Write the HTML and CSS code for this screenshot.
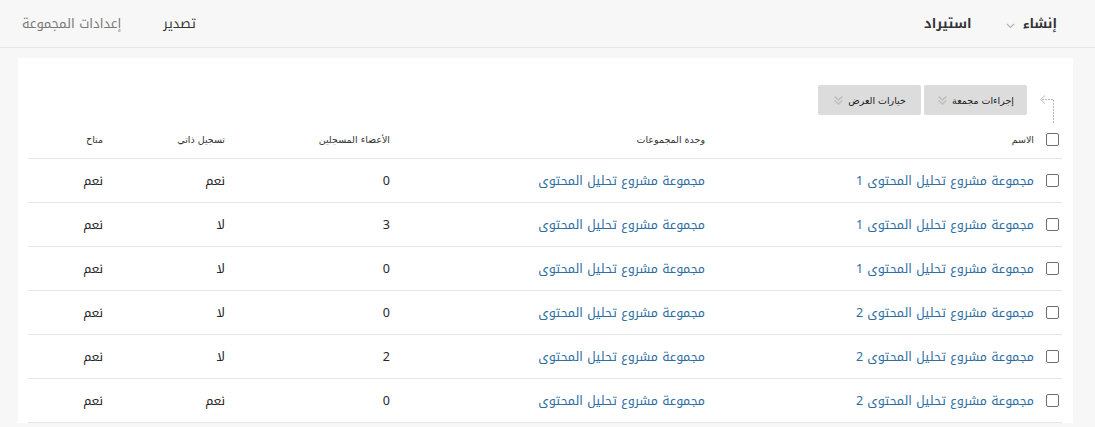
FILE: index.html
```html
<!DOCTYPE html>
<html lang="ar" dir="rtl">
<head>
  <meta charset="UTF-8" />
  <title>المجموعات</title>
  <link rel="stylesheet" href="styles.css">
</head>
<body>

  <div class="topbar">
    <div class="top-main">
      <a class="top-link strong">إنشاء <span class="chev">
        <svg width="9" height="6" viewBox="0 0 9 6"><path d="M1 1l3.5 3.5L8 1" fill="none" stroke="#b5b5b5" stroke-width="1.2"/></svg>
      </span></a>
      <a class="top-link strong">استيراد</a>
    </div>
    <div class="top-side">
      <a class="top-link dark">تصدير</a>
      <a class="top-link muted">إعدادات المجموعة</a>
    </div>
  </div>

  <div class="panel">
    <div class="toolbar">
      <svg class="select-arrow" width="20" height="30" viewBox="0 0 20 30">
        <path d="M16.5 30V6.5H4" fill="none" stroke="#b8b8b8" stroke-width="1" stroke-dasharray="2 1"/>
        <path d="M8 2.5L3.5 6.5 8 10.5" fill="none" stroke="#b8b8b8" stroke-width="1"/>
      </svg>
      <button class="tool-btn">إجراءات مجمعة <span class="dbl">
        <svg width="11" height="11" viewBox="0 0 11 11"><path d="M1.5 1.5l4 3.5 4-3.5M1.5 5.5l4 3.5 4-3.5" fill="none" stroke="#bdbdbd" stroke-width="1.4"/></svg>
      </span></button>
      <button class="tool-btn">خيارات العرض <span class="dbl">
        <svg width="11" height="11" viewBox="0 0 11 11"><path d="M1.5 1.5l4 3.5 4-3.5M1.5 5.5l4 3.5 4-3.5" fill="none" stroke="#bdbdbd" stroke-width="1.4"/></svg>
      </span></button>
    </div>

    <table class="groups">
      <colgroup>
        <col class="c-cb"><col class="c-name"><col class="c-set"><col class="c-num"><col class="c-self"><col class="c-avail">
      </colgroup>
      <thead>
        <tr>
          <th class="cb"><span class="box"></span></th>
          <th class="name-h">الاسم</th>
          <th>وحدة المجموعات</th>
          <th>الأعضاء المسجلين</th>
          <th>تسجيل ذاتي</th>
          <th>متاح</th>
        </tr>
      </thead>
      <tbody>
        <tr>
          <td class="cb"><span class="box"></span></td>
          <td class="name"><a>مجموعة مشروع تحليل المحتوى 1</a></td>
          <td><a>مجموعة مشروع تحليل المحتوى</a></td>
          <td>0</td><td>نعم</td><td>نعم</td>
        </tr>
        <tr>
          <td class="cb"><span class="box"></span></td>
          <td class="name"><a>مجموعة مشروع تحليل المحتوى 1</a></td>
          <td><a>مجموعة مشروع تحليل المحتوى</a></td>
          <td>3</td><td>لا</td><td>نعم</td>
        </tr>
        <tr>
          <td class="cb"><span class="box"></span></td>
          <td class="name"><a>مجموعة مشروع تحليل المحتوى 1</a></td>
          <td><a>مجموعة مشروع تحليل المحتوى</a></td>
          <td>0</td><td>لا</td><td>نعم</td>
        </tr>
        <tr>
          <td class="cb"><span class="box"></span></td>
          <td class="name"><a>مجموعة مشروع تحليل المحتوى 2</a></td>
          <td><a>مجموعة مشروع تحليل المحتوى</a></td>
          <td>0</td><td>لا</td><td>نعم</td>
        </tr>
        <tr>
          <td class="cb"><span class="box"></span></td>
          <td class="name"><a>مجموعة مشروع تحليل المحتوى 2</a></td>
          <td><a>مجموعة مشروع تحليل المحتوى</a></td>
          <td>2</td><td>لا</td><td>نعم</td>
        </tr>
        <tr>
          <td class="cb"><span class="box"></span></td>
          <td class="name"><a>مجموعة مشروع تحليل المحتوى 2</a></td>
          <td><a>مجموعة مشروع تحليل المحتوى</a></td>
          <td>0</td><td>نعم</td><td>نعم</td>
        </tr>
      </tbody>
    </table>
  </div>

</body>
</html>
```

FILE: styles.css
```css
body {
  margin: 0;
  background: #f7f7f7;
  font-family: "Noto Kufi Arabic", "Noto Sans Arabic", "DejaVu Sans", sans-serif;
  color: #262626;
  font-size: 12.5px;
}

.topbar {
  height: 47px;
  border-bottom: 1px solid #e6e6e6;
  display: flex;
  justify-content: space-between;
  align-items: center;
  padding: 0 38px 0 22px;
}

.top-main, .top-side {
  display: flex;
  align-items: center;
}

.top-main { gap: 34px; }
.top-side { gap: 42px; }

.top-link {
  font-size: 13px;
  display: flex;
  align-items: center;
  gap: 8px;
}

.top-link.strong {
  font-weight: bold;
  color: #333;
}

.top-link.dark { color: #333; }
.top-link.muted { color: #7a7a7a; }

.chev {
  display: inline-flex;
  margin-top: 4px;
}

.panel {
  background: #fff;
  margin: 10px 22px 0 18px;
  padding: 27px 11px 0 10px;
}

.toolbar {
  display: flex;
  align-items: flex-start;
  gap: 3px;
  height: 35px;
}

.select-arrow {
  margin: 8px 5px 0 7px;
}

.tool-btn {
  width: 103px;
  height: 30px;
  border: none;
  border-radius: 2px;
  background: #dcdcdc;
  font-family: "DejaVu Sans", sans-serif;
  font-size: 9.5px;
  color: #222;
  display: flex;
  align-items: center;
  justify-content: center;
  gap: 4px;
  padding: 0;
}

.dbl { display: inline-flex; }

.groups {
  width: 100%;
  border-collapse: collapse;
  table-layout: fixed;
}

.c-cb { width: 24px; }
.c-name { width: 323px; }
.c-set { width: 315px; }
.c-num { width: 165px; }
.c-self { width: 122px; }
.c-avail { width: 85px; }

.groups th {
  height: 38px;
  font-family: "DejaVu Sans", sans-serif;
  font-weight: normal;
  font-size: 9.5px;
  color: #333;
  text-align: right;
  padding: 0 10px 0 0;
  border-bottom: 1px solid #e6e6e6;
}

.groups td {
  height: 43px;
  padding: 0 10px 0 0;
  border-bottom: 1px solid #e6e6e6;
  white-space: nowrap;
}

.groups .cb {
  padding: 0 3px 0 0;
  vertical-align: middle;
}

.groups .name, .groups .name-h {
  padding-right: 4px;
}

.box {
  display: block;
  width: 11px;
  height: 11px;
  border: 1px solid #6f6f6f;
  border-radius: 2px;
  background: #fff;
}

.groups a {
  color: #2f6ea3;
  cursor: pointer;
}
```
